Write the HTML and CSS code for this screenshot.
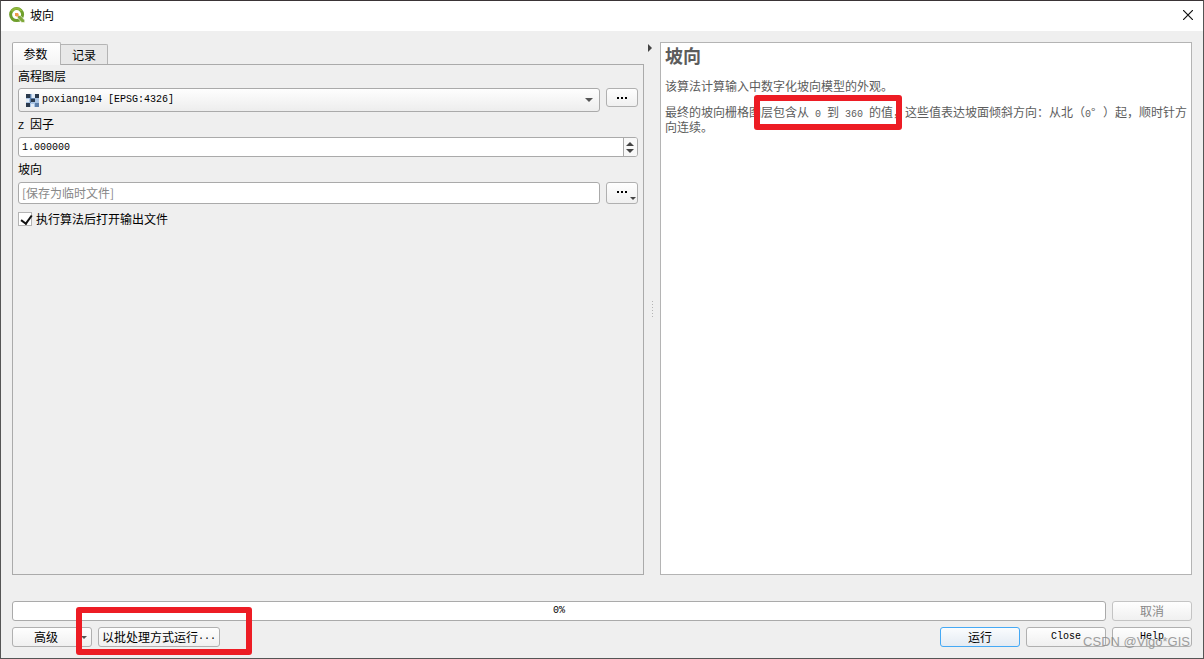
FILE: index.html
```html
<!DOCTYPE html>
<html lang="zh-CN">
<head>
<meta charset="utf-8">
<title>坡向</title>
<link rel="stylesheet" href="styles.css">
</head>
<body>
<div class="window">
  <header class="titlebar">
    <svg class="logo" viewBox="0 0 16 16" aria-hidden="true">
      <circle cx="7.6" cy="7.6" r="6" fill="#fff" stroke="#6f9f2c" stroke-width="3"/>
      <path d="M2.6 4.4A6 6 0 0 1 12.5 4" fill="none" stroke="#91b83c" stroke-width="2"/>
      <path d="M8.500 8.500h2.800l4.400 4.600v2.400h-2.900l-4.300-4.600z" fill="#7fa83a" stroke="#fff" stroke-width=".6"/>
      <path d="M6 6h2.800l.9 1-.1 2.400H7.200L6 8.300z" fill="#ee9b4b"/>
    </svg>
    <h1 class="title">坡向</h1>
    <button class="close" aria-label="关闭"><svg viewBox="0 0 10 10"><path d="M0 0l10 10M10 0L0 10" stroke="#111" stroke-width="1.2"/></svg></button>
  </header>

  <main class="content">
    <section class="params">
      <div class="tabs" role="tablist">
        <button class="tab tab-active" role="tab" aria-selected="true">参数</button>
        <button class="tab" role="tab" aria-selected="false">记录</button>
      </div>
      <div class="pane">
        <label class="label label-first" for="layer">高程图层</label>
        <div class="row">
          <div class="combo">
            <svg class="raster" viewBox="0 0 13 13" aria-hidden="true">
              <path fill="#a9c4e4" d="M0 0h13v13H0z"/>
              <path fill="#2b3a4d" d="M0 0h4v4H0zM9 0h4v4H9zM5 5h4v3H5zM0 9h4v4H0z"/>
              <path fill="#5c7ea8" d="M4 0h1v4H4zM4 4h5v1H4zM4 5h1v4H4zM9 9h4v4H9z"/>
              <path fill="#e3edf8" d="M6 0h3v4H6zM0 5h3v3H0zM5 10h3v3H5z"/>
            </svg>
            <select class="select mono" id="layer"><option>poxiang104 [EPSG:4326]</option></select>
            <svg class="arrow" viewBox="0 0 8 4"><path d="M0 0h8L4 4z" fill="#555"/></svg>
          </div>
          <button class="btn more more-short" aria-label="浏览图层"><svg class="dots" viewBox="0 0 10 2"><path d="M0 0h2v2H0zM4 0h2v2H4zM8 0h2v2H8z"/></svg></button>
        </div>
        <label class="label" for="factor"><span class="mono">Z </span>因子</label>
        <div class="spin">
          <input class="spin-input mono" id="factor" type="text" value="1.000000">
          <div class="steps">
            <button class="step" aria-label="增加"><svg viewBox="0 0 8 4"><path d="M0 4h8L4 0z" fill="#444"/></svg></button>
            <button class="step" aria-label="减少"><svg viewBox="0 0 8 4"><path d="M0 0h8L4 4z" fill="#444"/></svg></button>
          </div>
        </div>
        <label class="label" for="output">坡向</label>
        <div class="row">
          <input class="field" id="output" type="text" placeholder="[保存为临时文件]">
          <button class="btn more" aria-label="选择输出"><svg class="dots" viewBox="0 0 10 2"><path d="M0 0h2v2H0zM4 0h2v2H4zM8 0h2v2H8z"/></svg><svg class="corner" viewBox="0 0 6 3"><path d="M0 0h6L3 3z" fill="#444"/></svg></button>
        </div>
        <label class="check"><input class="tick" type="checkbox" checked>执行算法后打开输出文件</label>
      </div>
    </section>

    <div class="splitter">
      <button class="fold" aria-label="折叠帮助"><svg viewBox="0 0 4 8"><path d="M0 0v8l4-4z" fill="#444"/></svg></button>
      <span class="grip"></span>
    </div>

    <article class="help">
      <h2 class="help-title">坡向</h2>
      <p class="help-text">该算法计算输入中数字化坡向模型的外观。</p>
      <p class="help-text">最终的坡向栅格图层包含从<span class="mono"> 0 </span>到<span class="mono"> 360 </span>的值，这些值表达坡面倾斜方向：从北（<span class="mono">0</span><span class="degree">°</span>）起，顺时针方向连续。</p>
      <span class="mark mark-help"></span>
    </article>
  </main>

  <footer class="footer">
    <div class="row">
      <div class="progress mono" role="progressbar" aria-valuenow="0" aria-valuemin="0" aria-valuemax="100">0%</div>
      <button class="btn wide" disabled>取消</button>
    </div>
    <div class="row">
      <button class="btn advanced">高级<svg class="advanced-arrow" viewBox="0 0 6 3"><path d="M0 0h6L3 3z" fill="#555"/></svg></button>
      <button class="btn batch">以批处理方式运行<span class="mono">...</span></button>
      <span class="spacer"></span>
      <button class="btn wide primary">运行</button>
      <button class="btn wide mono">Close</button>
      <button class="btn wide mono">Help</button>
    </div>
    <span class="mark mark-batch"></span>
    <span class="watermark">CSDN @Vigo*GIS</span>
  </footer>
</div>
</body>
</html>
```
FILE: styles.css
```css
* {
  box-sizing: border-box;
}

body {
  margin: 0;
  font: 12px/14px "Noto Sans CJK SC", sans-serif;
  color: #000;
}

button,
input,
select {
  margin: 0;
  padding: 0;
  font: inherit;
  color: inherit;
}

svg {
  display: block;
}

.mono {
  font-family: "Liberation Mono", "Noto Sans CJK SC", monospace;
  font-size: 10px;
  line-height: 10px;
  white-space: pre-wrap;
}

.window {
  display: flex;
  flex-direction: column;
  height: 100vh;
  background: #efefef;
  border: 1px solid #555;
  border-top-color: #3a3436;
}

.titlebar {
  display: flex;
  align-items: center;
  gap: 5px;
  height: 30px;
  padding: 0 10px 2px 8px;
  background: #fff;
}

.logo {
  width: 16px;
  height: 16px;
}

.title {
  flex: 1;
  margin: 0;
  font-size: 12px;
  font-weight: 400;
}

.close {
  width: 10px;
  height: 10px;
  background: none;
  border: 0;
}

.content {
  display: grid;
  grid-template-columns: 632fr 16px 532fr;
  flex: 1;
  min-height: 0;
  padding: 11px 11px 0;
}

.params {
  display: flex;
  flex-direction: column;
  min-width: 0;
}

.tabs {
  display: flex;
  align-items: flex-end;
  height: 22px;
}

.tab {
  width: 47px;
  height: 20px;
  background: #e8e8e8;
  border: 1px solid #b4b4b4;
  border-bottom: 0;
  border-left: 0;
  border-radius: 0 2px 0 0;
}

.tab-active {
  position: relative;
  width: 49px;
  height: 23px;
  margin-bottom: -1px;
  padding-right: 2px;
  background: linear-gradient(#fff, #f4f4f4);
  border-left: 1px solid #aaa;
  border-radius: 2px 2px 0 0;
}

.pane {
  flex: 1;
  padding: 0 5px;
  border: 1px solid #aaa;
}

.label {
  display: block;
  height: 25px;
  line-height: 24px;
}

.label-first {
  height: 23px;
  line-height: 21px;
}

.row {
  display: flex;
  align-items: flex-start;
  gap: 6px;
}

.btn {
  position: relative;
  display: flex;
  align-items: center;
  justify-content: center;
  height: 20px;
  background: linear-gradient(#fefefe, #f0f0f0);
  border: 1px solid #b0b0b0;
  border-radius: 3px;
}

.btn:disabled {
  color: #888;
  border-color: #c4c4c4;
}

.primary {
  background: linear-gradient(#fafcfe, #e4ebf3);
  border-color: #45a9f5;
}

.combo {
  position: relative;
  flex: 1;
  height: 24px;
}

.select {
  width: 100%;
  height: 100%;
  padding: 0 23px;
  line-height: 16px;
  appearance: none;
  background: linear-gradient(#fefefe, #ededed);
  border: 1px solid #aaa;
  border-radius: 3px;
}

.raster {
  position: absolute;
  top: 6px;
  left: 8px;
  width: 13px;
  height: 13px;
}

.arrow {
  position: absolute;
  top: 10px;
  right: 7px;
  width: 8px;
  height: 4px;
}

.more {
  width: 32px;
  height: 22px;
  padding-bottom: 2px;
}

.more-short {
  height: 19px;
  padding-bottom: 0;
}

.dots {
  width: 10px;
  height: 2px;
}

.corner {
  position: absolute;
  right: 1px;
  bottom: 3px;
  width: 6px;
  height: 3px;
}

.spin {
  display: flex;
  height: 20px;
  background: #fff;
  border: 1px solid #aaa;
  border-radius: 3px;
  overflow: hidden;
}

.spin-input {
  flex: 1;
  min-width: 0;
  padding: 0 3px;
  background: none;
  border: 0;
}

.steps {
  display: flex;
  flex-direction: column;
  justify-content: center;
  gap: 3px;
  width: 14px;
  padding-left: 2px;
  background: #f8f8f8;
  border-left: 1px solid #aaa;
}

.step {
  width: 8px;
  height: 4px;
  background: none;
  border: 0;
}

.field {
  flex: 1;
  min-width: 0;
  height: 22px;
  padding: 0 3px 2px;
  background: #fff;
  border: 1px solid #aaa;
  border-radius: 3px;
}

.field::placeholder {
  color: #888;
  opacity: 1;
}

.check {
  display: flex;
  align-items: center;
  gap: 4px;
  height: 30px;
}

.tick {
  width: 14px;
  height: 14px;
  appearance: none;
  background: #fff;
  border: 1px solid #b4b4b4;
}

.tick:checked::before {
  display: block;
  width: 5px;
  height: 9px;
  margin: 0 4px;
  border: solid #111;
  border-width: 0 2px 2px 0;
  content: "";
  transform: rotate(36deg);
}

.splitter {
  position: relative;
  display: flex;
  flex-direction: column;
  align-items: center;
  justify-content: center;
}

.fold {
  position: absolute;
  top: 2px;
  left: 4px;
  width: 4px;
  height: 8px;
  background: none;
  border: 0;
}

.grip {
  width: 1px;
  height: 16px;
  background: repeating-linear-gradient(#b4b4b4 0 1px, transparent 1px 3px);
}

.help {
  position: relative;
  min-width: 0;
  padding: 2px 2px 2px 4px;
  background: #fff;
  border: 1px solid #b4b4b4;
  color: #5c5c5c;
}

.help-title {
  margin: 0 0 14px;
  font-size: 18px;
  font-weight: 700;
  line-height: 20px;
}

.help-text {
  margin: 0 0 12px;
  line-height: 14px;
}

.degree {
  display: inline-block;
  width: 12px;
}

.mark {
  position: absolute;
  border: 6px solid #ed1c24;
  border-radius: 3px;
  pointer-events: none;
}

.mark-help {
  top: 52px;
  left: 93px;
  width: 148px;
  height: 35px;
}

.footer {
  position: relative;
  display: flex;
  flex-direction: column;
  gap: 6px;
  padding: 26px 11px 11px;
}

.progress {
  display: flex;
  flex: 1;
  align-items: center;
  justify-content: center;
  height: 20px;
  background: #fff;
  border: 1px solid #aaa;
  border-radius: 3px;
}

.wide {
  width: 80px;
}

.advanced {
  width: 80px;
  padding-right: 12px;
}

.advanced-arrow {
  position: absolute;
  top: 8px;
  right: 4px;
  width: 6px;
  height: 3px;
}

.batch {
  padding: 0 3px;
}

.spacer {
  flex: 1;
}

.mark-batch {
  bottom: 3px;
  left: 75px;
  width: 176px;
  height: 48px;
}

.watermark {
  position: absolute;
  right: 13px;
  bottom: 8px;
  font: 13px/16px "Liberation Sans", sans-serif;
  color: #888;
  opacity: 0.8;
}
```
